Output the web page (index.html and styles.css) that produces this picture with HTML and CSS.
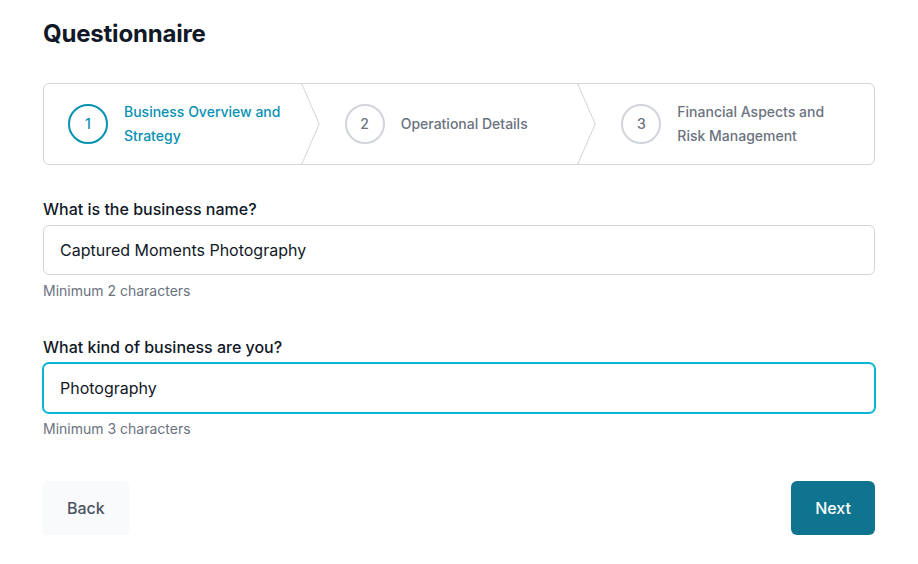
FILE: index.html
```html
<!DOCTYPE html>
<html lang="en">

<head>
    <meta charset="UTF-8">
    <meta name="viewport" content="width=device-width, initial-scale=1.0">
    <title>Questionnaire</title>
    <link rel="stylesheet" href="styles.css">
</head>

<body>
    <div class="page">
        <h1 class="title">Questionnaire</h1>

        <!-- 步骤条 -->
        <ol class="steps">
            <li class="step current">
                <span class="step-num">1</span>
                <span class="step-label">Business Overview and Strategy</span>
                <svg class="chevron" viewBox="0 0 22 80" fill="none" preserveAspectRatio="none">
                    <path d="M0 -2L20 40L0 82" vector-effect="non-scaling-stroke" stroke="currentColor" stroke-linejoin="round" />
                </svg>
            </li>
            <li class="step">
                <span class="step-num">2</span>
                <span class="step-label">Operational Details</span>
                <svg class="chevron" viewBox="0 0 22 80" fill="none" preserveAspectRatio="none">
                    <path d="M0 -2L20 40L0 82" vector-effect="non-scaling-stroke" stroke="currentColor" stroke-linejoin="round" />
                </svg>
            </li>
            <li class="step">
                <span class="step-num">3</span>
                <span class="step-label">Financial Aspects and Risk Management</span>
            </li>
        </ol>

        <div class="field">
            <label class="field-label" for="name">What is the business name?</label>
            <input class="input" id="name" type="text" value="Captured Moments Photography">
            <p class="hint">Minimum 2 characters</p>
        </div>

        <div class="field">
            <label class="field-label" for="kind">What kind of business are you?</label>
            <input class="input focused" id="kind" type="text" value="Photography">
            <p class="hint">Minimum 3 characters</p>
        </div>

        <div class="actions">
            <button class="btn btn-back">Back</button>
            <button class="btn btn-next">Next</button>
        </div>
    </div>
</body>

</html>
```

FILE: styles.css
```css
* {
    margin: 0px;
    padding: 0px;
    box-sizing: border-box;
    list-style: none;
}

body {
    font-family: Inter, "Noto Sans", sans-serif;
    color: #111827;
    background: #fff;
}

.page {
    padding: 18px 43px 0 43px;
}

.title {
    font-size: 24px;
    line-height: 32px;
    font-weight: 700;
    color: #111827;
    letter-spacing: -0.2px;
}

/* 步骤条 */
.steps {
    display: flex;
    margin-top: 33px;
    border: 1px solid #d1d5db;
    border-radius: 6px;
}

.step {
    flex: 1;
    position: relative;
    display: flex;
    align-items: center;
    padding: 16px 24px;
    font-size: 14px;
    line-height: 24px;
    font-weight: 500;
    color: #6b7280;
}

.step-num {
    flex-shrink: 0;
    width: 40px;
    height: 40px;
    border: 2px solid #d1d5db;
    border-radius: 50%;
    display: flex;
    align-items: center;
    justify-content: center;
    color: #6b7280;
}

.step-label {
    margin-left: 16px;
}

.current .step-num {
    border-color: #0891b2;
    color: #0891b2;
}

.current .step-label {
    color: #0891b2;
}

.chevron {
    position: absolute;
    right: 0;
    top: 0;
    width: 20px;
    height: 100%;
    color: #d1d5db;
}

/* 表单 */
.field {
    margin-top: 32px;
}

.field + .field {
    margin-top: 34px;
}

.field-label {
    display: block;
    font-size: 16px;
    line-height: 24px;
    font-weight: 500;
    color: #111827;
}

.input {
    display: block;
    width: 100%;
    height: 50px;
    margin-top: 4px;
    padding: 0 16px;
    border: 1px solid #d1d5db;
    border-radius: 6px;
    font-family: inherit;
    font-size: 16px;
    color: #111827;
    outline: none;
}

.focused {
    border-color: #06b6d4;
    box-shadow: 0 0 0 1px #06b6d4;
}

.hint {
    margin-top: 6px;
    font-size: 14px;
    line-height: 20px;
    color: #6b7280;
}

.actions {
    display: flex;
    justify-content: space-between;
    margin-top: 42px;
}

.btn {
    border: none;
    border-radius: 6px;
    padding: 15px 24px;
    font-family: inherit;
    font-size: 16px;
    line-height: 24px;
    font-weight: 500;
    cursor: pointer;
}

.btn-back {
    background: #f9fafb;
    color: #4b5563;
    box-shadow: 0 1px 2px rgba(0, 0, 0, 0.05);
}

.btn-next {
    background: #0e7490;
    color: #fff;
}
```
